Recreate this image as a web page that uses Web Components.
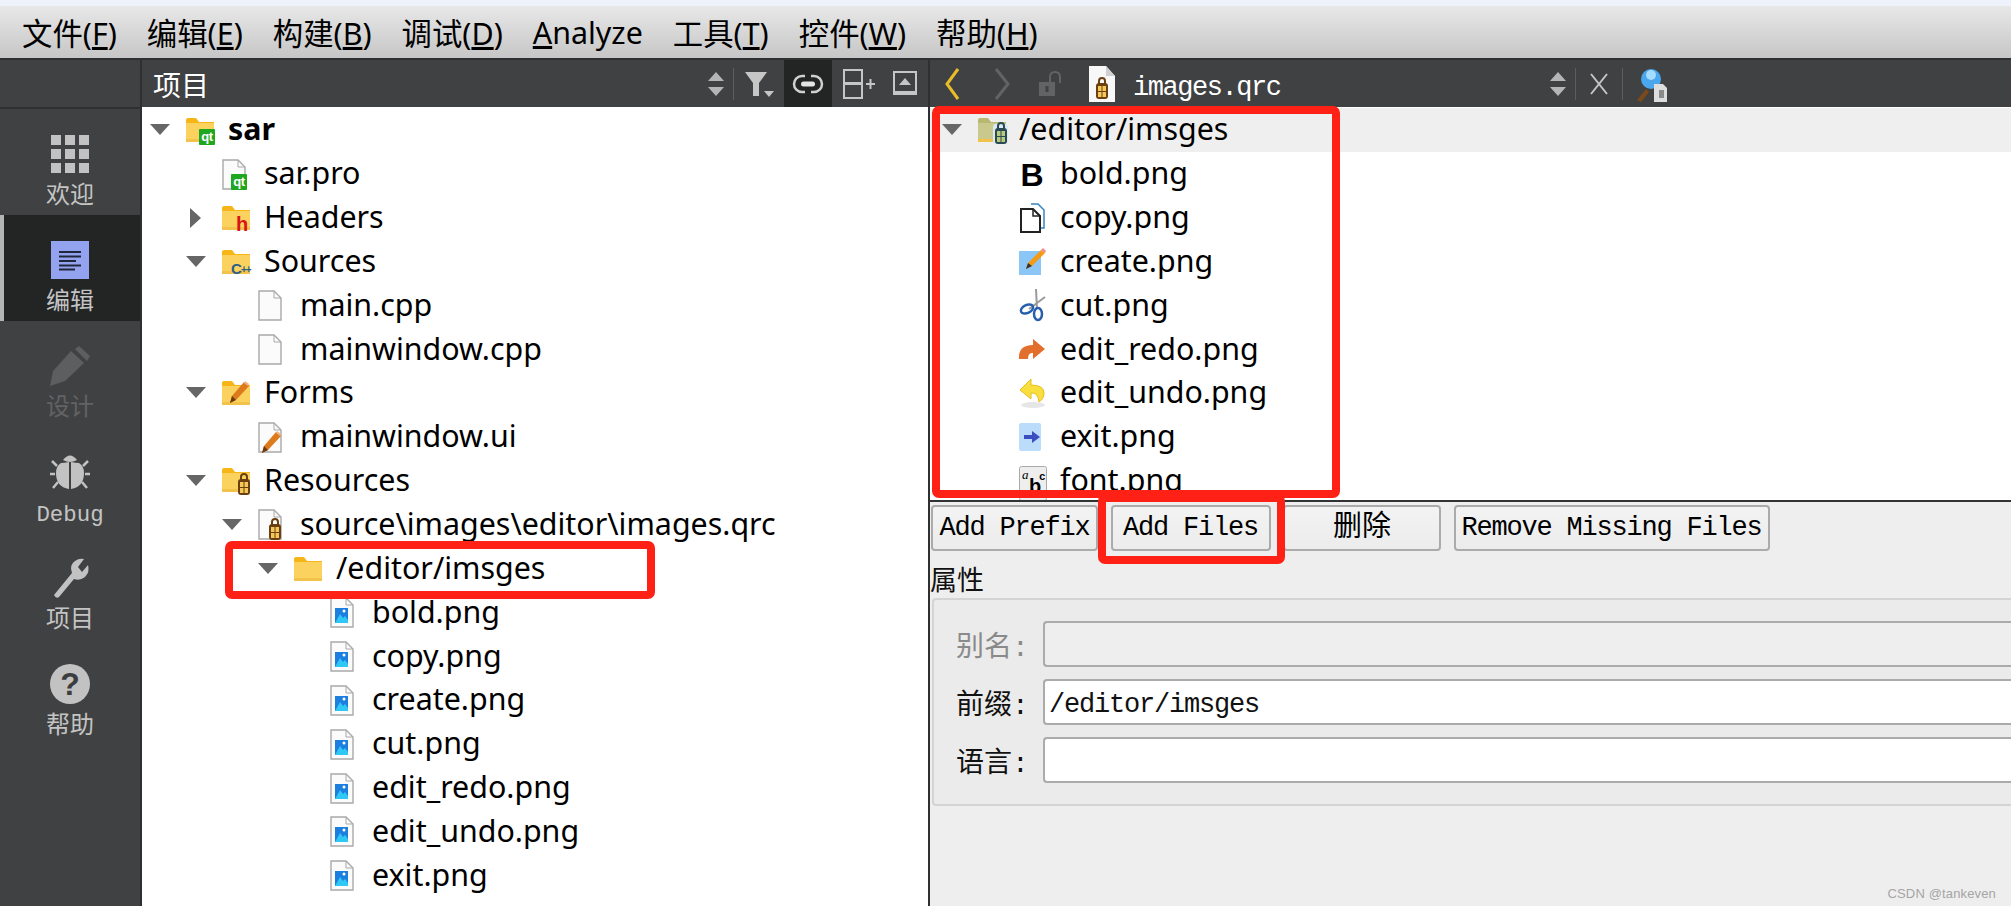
<!DOCTYPE html>
<html lang="zh"><head><meta charset="utf-8"><title>Qt Creator</title>
<style>
html,body{margin:0;height:906px;width:2011px;overflow:hidden;background:#eee}
body{font-family:"Noto Sans","Noto Sans CJK SC",sans-serif;}
</style></head><body>
<ide-app></ide-app>
<script>
const CJK='"Noto Sans","Noto Sans CJK SC",sans-serif';
const MONO='"Liberation Mono","Noto Sans CJK SC",monospace';
const qt=(x,y)=>`<rect x="${x}" y="${y}" width="16" height="16" rx="1" fill="#1fa81f"/><text x="${x+8}" y="${y+12}" font-family="Liberation Sans" font-weight="700" font-size="13" letter-spacing="-.5" text-anchor="middle" fill="#fff">qt</text>`;
const folderBase=(f='#fbd25e',t='#f7b617')=>`<path d="M0 4q0-2 2-2h8l3 4h15v20H0z" fill="${t}"/><rect x="0" y="7" width="28" height="19" fill="${f}"/><rect x="0" y="23" width="28" height="3" fill="#f3c24a"/>`;
const lockG=(x,y,c='#6b3f10',w='#f4c95a')=>`<path d="M${x+3} ${y+6}v-3q0-3 3-3t3 3v3" fill="none" stroke="${c}" stroke-width="2"/><rect x="${x}" y="${y+5}" width="12" height="16" rx="3" fill="${c}"/><rect x="${x+2}" y="${y+8}" width="3.500" height="5" fill="${w}"/><rect x="${x+6.500}" y="${y+8}" width="3.500" height="5" fill="${w}"/><rect x="${x+2}" y="${y+14}" width="3.500" height="5" fill="${w}"/><rect x="${x+6.500}" y="${y+14}" width="3.500" height="5" fill="${w}"/>`;
const page=(x=1)=>`<path d="M${x} 1h15l7 7v22H${x}z" fill="#fbfbfb" stroke="#a9a9a9" stroke-width="1.400"/><path d="M${x+15} 1v7h7" fill="none" stroke="#a9a9a9"/>`;
const penc=(x,y,s=1)=>`<g transform="translate(${x} ${y}) scale(${s})"><path d="M0 22l2-7L14 1l5 4L6 19z" fill="#dd7a1c"/><path d="M0 22l2-7 4 4z" fill="#6b3a10"/><path d="M15 0l4 3-1 2-4-3z" fill="#f0b080"/></g>`;
const ICONS={
 grid:[38,38,[0,14,28].flatMap(y=>[0,14,28].map(x=>`<rect x="${x}" y="${y}" width="10" height="10" fill="#c2c2c2"/>`)).join('')],
 edit:[38,38,`<rect width="38" height="38" fill="#94a3ef"/><path d="M8 11h22M8 15.500h22M8 20h17M8 24.500h22M8 28.500h16" stroke="#20263c" stroke-width="2"/>`],
 pencil:[40,40,`<path d="M0 40l3-15L21 5l13 12-19 18z" fill="#5d5e60"/><path d="M25 3l4-3 11 10-3 5z" fill="#5d5e60"/>`],
 bug:[40,38,`<path d="M13 7q7-9 14 0-7 4-14 0z" fill="#c2c2c2"/><path d="M19 9v27Q6 34 6 20q0-7 5-10 3 0 8-1z" fill="#c2c2c2"/><path d="M21 9v27q13-2 13-16 0-7-5-10-3 0-8-1z" fill="#c2c2c2"/><path d="M7 13L2 8M33 13l5-5M5 21H0M35 21h5M8 29l-5 6M32 29l5 6" stroke="#c2c2c2" stroke-width="2.500"/>`],
 wrench:[38,40,`<path d="M3 37L21 15q-3-8 3-12 4-3 9-2l-6 8 4 5 6-7q2 7-3 12-5 4-11 2L8 39q-3 2-5-2z" fill="#c2c2c2"/>`],
 help:[40,40,`<circle cx="20" cy="20" r="20" fill="#c2c2c2"/><text x="20" y="31" font-family="Liberation Sans" font-weight="700" font-size="32" text-anchor="middle" fill="#3c3d3e">?</text>`],
 updown:[16,32,`<path d="M8 4l8 9H0zM0 19h16l-8 9z" fill="#b5b5b5"/>`],
 filter:[30,26,`<path d="M0 1h22L14 12v13H8V12z" fill="#c6c6c6"/><path d="M19 20h10l-5 6z" fill="#c6c6c6"/>`],
 link:[28,22,`<path d="M11 3H8a8 8 0 000 16h3M17 3h3a8 8 0 010 16h-3" fill="none" stroke="#d0d0d0" stroke-width="2.500"/><rect x="7" y="8.500" width="14" height="5" rx="2.500" fill="#e4e4e4"/>`],
 split:[32,30,`<rect x="1" y="1" width="18" height="13" fill="none" stroke="#c6c6c6" stroke-width="2"/><rect x="1" y="15" width="18" height="14" fill="none" stroke="#c6c6c6" stroke-width="2"/><path d="M23 15h9M27.500 10v10" stroke="#c6c6c6" stroke-width="2"/>`],
 hide:[24,26,`<rect x="1" y="1" width="22" height="22" fill="none" stroke="#c6c6c6" stroke-width="2"/><rect x="0" y="20" width="24" height="4" fill="#c6c6c6"/><path d="M12 7l6 7H6z" fill="#c6c6c6"/>`],
 back:[16,32,`<path d="M14 1L3 16l11 15" fill="none" stroke="#e8bd27" stroke-width="3"/>`],
 fwd:[16,32,`<path d="M2 1l12 15L2 31" fill="none" stroke="#626364" stroke-width="3"/>`],
 lock:[26,26,`<path d="M11 12V6q0-5 5-5t5 5v6" fill="none" stroke="#626364" stroke-width="2"/><rect x="0" y="11" width="16" height="14" fill="#626364"/><rect x="6.500" y="15" width="3" height="6" fill="#404142"/>`],
 qrcfile:[28,38,`<path d="M1 1h17l9 10v26H1z" fill="#f8f8f8"/><path d="M18 1v10h9" fill="#d0d0d0"/>${lockG(8,13)}`],
 close:[18,22,`<path d="M1 1l16 20M17 1L1 21" stroke="#c6c6c6" stroke-width="2"/>`],
 locator:[32,36,`<path d="M2 34l9-11 3 3-8 10z" fill="#7a4a1c"/><circle cx="16" cy="13" r="10" fill="#4aa7ee"/><circle cx="16" cy="9" r="5" fill="#a6dcff"/><path d="M19 18h9l4 4v14H19z" fill="#ddd"/><path d="M24 24h5v8h-5z" fill="#8a8a8a"/>`],
 fqt:[29,27,`${folderBase()}${qt(13,13)}`],
 fh:[29,27,`${folderBase()}<text x="20" y="27" font-family="Liberation Sans" font-weight="700" font-size="20" text-anchor="middle" fill="#d8141a">h</text>`],
 fcpp:[29,27,`${folderBase()}<text x="9" y="26" font-family="Liberation Sans" font-weight="700" font-size="15" fill="#2c5f86">C</text><text x="19" y="25" font-family="Liberation Sans" font-weight="700" font-size="10" letter-spacing="-1" fill="#2c5f86">++</text>`],
 fform:[29,27,`${folderBase()}${penc(8,2,1)}`],
 flock:[29,30,`${folderBase()}${lockG(16,8)}`],
 folder:[29,27,folderBase()],
 fprefix:[30,28,`${folderBase('#c9c98e','#b8b870')}<rect x="15" y="8" width="15" height="20" rx="3" fill="#dbe9f6"/>${lockG(17,7,'#2a4a52','#b9c97e')}`],
 pqt:[26,30,`${page()}${qt(9,15)}`],
 pcpp:[26,30,page()],
 pui:[26,30,`${page()}${penc(4,9,1)}`],
 pqrc:[26,32,`${page()}${lockG(11,10)}`],
 png:[24,30,`${page()}<path d="M5 11h13v15H5z" fill="#1c7fe0"/><path d="M5 26l5-9 3 4 2-2 3 4v3z" fill="#2fc7f4"/><circle cx="14" cy="14" r="1.500" fill="#fff"/>`],
 b:[26,28,`<text x="13" y="26" font-family="Liberation Sans" font-weight="700" font-size="32" text-anchor="middle" fill="#000">B</text>`],
 copy:[26,30,`<path d="M12 1h7l6 6v18h-5" fill="none" stroke="#3a84c0" stroke-width="1.500"/><path d="M2 6h12l7 7v16H2z" fill="#fff" stroke="#222" stroke-width="2"/><path d="M14 6v7h7" fill="none" stroke="#222" stroke-width="1.500"/>`],
 create:[26,28,`<rect y="4" width="22" height="24" fill="#8cc6f7"/><path d="M7 22l2-6L22 3l4 3-13 13z" fill="#f49a14"/><path d="M7 22l2-6 4 3z" fill="#333"/><path d="M22 3l2-2 3 3-1 2z" fill="#f08a8a"/>`],
 cut:[28,32,`<path d="M26 8L10 20M17 0l1 20" stroke="#9a9a9a" stroke-width="2" fill="none"/><ellipse cx="8" cy="20" rx="6.500" ry="4" transform="rotate(-25 8 20)" fill="none" stroke="#2a5fae" stroke-width="2.500"/><ellipse cx="19" cy="25" rx="4" ry="6" fill="none" stroke="#2a5fae" stroke-width="2.500"/>`],
 redo:[26,20,`<path d="M14 0l12 10-12 10v-6q-5-1-5 6H0Q-1 6 14 6z" fill="#e2702c"/>`],
 undo:[26,30,`<ellipse cx="14" cy="27" rx="12" ry="3" fill="#e6e6e6"/><path d="M12 1L1 12l11 9v-6q7-1 8 9 5-3 5-9 0-8-13-8z" fill="#f8df3e" stroke="#e6bd22"/>`],
 exit:[22,28,`<rect width="22" height="28" rx="2" fill="#bcdcfb"/><path d="M5 12h8V8l8 6-8 6v-4H5z" fill="#3c4fc0"/>`],
 font:[28,30,`<rect x=".5" y=".5" width="27" height="34" rx="2" fill="#eee" stroke="#aaa"/><text x="3" y="13" font-family="Liberation Serif" font-style="italic" font-size="13">a</text><text x="10" y="27" font-family="Liberation Sans" font-weight="700" font-size="20">b</text><text x="20" y="14" font-family="Liberation Mono" font-weight="700" font-size="11">c</text>`],
};
function def(name,css,html,init){
 customElements.define(name,class extends HTMLElement{
  constructor(){super();this.attachShadow({mode:'open'}).innerHTML=`<style>${css}</style>${html}`;}
  connectedCallback(){init&&init.call(this,this.shadowRoot);}
 });
}
def('ide-icon',':host{display:inline-flex;flex:none}svg{display:block;overflow:visible}','',function(r){
 if(r.querySelector('svg'))return;
 const [w,h,b]=ICONS[this.getAttribute('name')];
 r.innerHTML+=`<svg xmlns="http://www.w3.org/2000/svg" width="${w}" height="${h}" viewBox="0 0 ${w} ${h}">${b}</svg>`;
});
def('menu-bar',`:host{display:flex;align-items:center;gap:30px;padding-left:22px;box-sizing:border-box;
 background:linear-gradient(#e8e8e8,#c6c6c6);border-bottom:2px solid #2f3031;color:#000;font:30.4px ${CJK};height:54px}`,'<slot></slot>');
def('side-item',`:host{display:flex;flex-direction:column;align-items:center;height:106px;box-sizing:border-box;padding-top:var(--pt,25px);color:#c4c4c4;font:24px/30px ${CJK};position:relative}
 :host([active]){background:#232525}
 :host([active])::before{content:"";position:absolute;left:0;top:0;bottom:0;width:4px;background:#b4b4b4}
 :host([disabled]){color:#626364}
 .i{height:40px;display:flex;align-items:center;justify-content:center}
 .l{margin-top:5px;white-space:nowrap}
 :host([mono]) .l{font:22.4px/30px ${MONO};margin-top:8px}`,'<div class="i"><slot name="icon"></slot></div><div class="l"><slot></slot></div>');
def('side-bar',`:host{display:flex;flex-direction:column;width:142px;flex:none;background:#404142;box-sizing:border-box;border-right:2px solid #2f3031;height:846px}
 .top{height:47px;border-bottom:2px solid #2f3031;box-sizing:content-box;margin-bottom:0}`,'<div class="top"></div><slot></slot>');
def('tool-bar',`:host{display:flex;align-items:center;height:47px;background:#404142;color:#fff;flex:none;font:28px ${CJK};position:relative}`,'<slot></slot>');
def('tool-sep',':host{display:block;width:1px;height:32px;background:#5c5d5e;flex:none}','');
def('tree-row',`:host{display:flex;align-items:center;height:43.85px;flex:none;padding-left:calc(var(--left,8px) + var(--level,0) * var(--indent,36px));color:#000;font:30.4px ${CJK};white-space:nowrap;box-sizing:border-box}
 :host([current]){background:#efefef}
 :host([bold]){font-weight:700}
 .a{width:36px;flex:none;display:flex;align-items:center}
 .ic{width:var(--icon-w,42px);flex:none;display:flex;align-items:center}
 .t{position:relative;top:-1px}
 i{display:block;width:0;height:0}
 :host([open]) i{border-left:10px solid transparent;border-right:10px solid transparent;border-top:11px solid #666}
 :host([closed]) i{margin-left:4px;border-top:10px solid transparent;border-bottom:10px solid transparent;border-left:11px solid #666}`,
 '<div class="a"><i></i></div><div class="ic"><slot name="icon"></slot></div><div class="t"><slot></slot></div>');
def('red-box',`:host{position:absolute;display:block;box-sizing:border-box;border:8px solid #ff2116;border-radius:7px;pointer-events:none}`,'');
def('push-btn',`:host{display:flex;align-items:center;justify-content:center;height:46px;box-sizing:border-box;border:2px solid #ababab;border-radius:4px;background:linear-gradient(#f3f3f3,#ececec);color:#000;font:27px/1 ${MONO};letter-spacing:-1.2px;flex:none;white-space:nowrap}`,'<slot></slot>');
def('form-row',`:host{display:flex;align-items:center;gap:16px;height:46px;font:27px ${MONO};letter-spacing:-1.2px;color:#111}
 :host([disabled]){color:#8a8a8a}
 .l{width:71px;flex:none;white-space:nowrap;letter-spacing:0;font-size:28px}
 .f{flex:1;height:46px;box-sizing:border-box;border:2px solid #ababab;border-right:0;border-radius:4px 0 0 4px;background:#fff;padding-left:4px;line-height:48px;color:#111;white-space:nowrap}
 :host([disabled]) .f{background:#eee}`,'<div class="l"><slot name="label"></slot></div><div class="f"><slot></slot></div>');
def('group-box',`:host{display:flex;flex-direction:column;gap:12px;margin:0 0 0 2px;height:208px;box-sizing:border-box;padding:21px 0 0 22px;background:#ebebeb;border:2px solid #d4d4d4;border-right:0;border-radius:4px 0 0 4px}`,'<slot></slot>');
def('tree-pane',`:host{display:flex;flex-direction:column;background:#fff;overflow:hidden;position:relative;box-sizing:border-box}`,'<slot></slot>');
def('left-pane',`:host{display:flex;flex-direction:column;width:786px;flex:none;height:846px;background:#fff}`,'<slot></slot>');
def('right-pane',`:host{display:flex;flex-direction:column;flex:1;min-width:0;height:846px;background:#eee;border-left:2px solid #2f3031;position:relative}`,'<slot></slot>');
def('water-mark',`:host{position:absolute;right:15px;bottom:5px;font:13px "Liberation Sans",sans-serif;color:#a5a5a5;letter-spacing:.15px}`,'<slot></slot>');
const row=(attrs,ic,t)=>`<tree-row ${attrs}><ide-icon slot="icon" name="${ic}"></ide-icon>${t}</tree-row>`;
const lv=n=>`style="--level:${n}"`;
const pngs=['bold','copy','create','cut','edit_redo','edit_undo','exit'];
def('ide-app',`:host{display:flex;flex-direction:column;width:2011px;height:906px;overflow:hidden}
 .strip{height:6px;background:#eef2fb;flex:none}
 .body{display:flex;flex:1;min-height:0;position:relative}
 .menu u{text-underline-offset:2px}
 .title{margin-left:11px;flex:1}
 .file{font:27px ${MONO};letter-spacing:-1.45px;flex:1;margin-left:17px;position:relative;top:4px}
 .on{width:48px;height:47px;background:#232525;display:flex;align-items:center;justify-content:center;flex:none}
 tool-bar ide-icon{flex:none}
 .btns{display:flex;gap:12.5px;height:46px;padding:3px 0 0 1px;flex:none}
 .big{font-size:29px;letter-spacing:0}
 .prop{font:27px/36px ${CJK};height:47px;padding-top:11px;box-sizing:border-box;flex:none;color:#111}
 .line{height:2px;background:#333;flex:none}
 tree-pane.r{--left:12px;--indent:41px;--icon-w:41px;height:393px;flex:none;padding-top:1px}
 tree-pane.l{flex:1;padding-top:1px}
`,`
<div class="strip"></div>
<menu-bar class="menu"><span>文件(<u>F</u>)</span><span>编辑(<u>E</u>)</span><span>构建(<u>B</u>)</span><span>调试(<u>D</u>)</span><span><u>A</u>nalyze</span><span>工具(<u>T</u>)</span><span>控件(<u>W</u>)</span><span>帮助(<u>H</u>)</span></menu-bar>
<div class="body">
<side-bar>
 <side-item><ide-icon slot="icon" name="grid"></ide-icon>欢迎</side-item>
 <side-item active><ide-icon slot="icon" name="edit"></ide-icon>编辑</side-item>
 <side-item disabled><ide-icon slot="icon" name="pencil"></ide-icon>设计</side-item>
 <side-item mono><ide-icon slot="icon" name="bug"></ide-icon>Debug</side-item>
 <side-item><ide-icon slot="icon" name="wrench"></ide-icon>项目</side-item>
 <side-item><ide-icon slot="icon" name="help"></ide-icon>帮助</side-item>
</side-bar>
<left-pane>
 <tool-bar>
  <span class="title">项目</span>
  <ide-icon name="updown" style="margin-right:9px"></ide-icon><tool-sep></tool-sep>
  <ide-icon name="filter" style="margin-left:11px;margin-right:9px"></ide-icon>
  <span class="on"><ide-icon name="link"></ide-icon></span>
  <ide-icon name="split" style="margin-left:11px"></ide-icon>
  <ide-icon name="hide" style="margin:0 11px 0 18px"></ide-icon>
 </tool-bar>
 <tree-pane class="l">
  ${row('open bold '+lv(0),'fqt','sar')}
  ${row(lv(1),'pqt','sar.pro')}
  ${row('closed '+lv(1),'fh','Headers')}
  ${row('open '+lv(1),'fcpp','Sources')}
  ${row(lv(2),'pcpp','main.cpp')}
  ${row(lv(2),'pcpp','mainwindow.cpp')}
  ${row('open '+lv(1),'fform','Forms')}
  ${row(lv(2),'pui','mainwindow.ui')}
  ${row('open '+lv(1),'flock','Resources')}
  ${row('open '+lv(2),'pqrc','source\\images\\editor\\images.qrc')}
  ${row('open '+lv(3),'folder','/editor/imsges')}
  ${pngs.map(n=>row(lv(4),'png',n+'.png')).join('')}
  <red-box style="left:83px;top:434px;width:430px;height:58px"></red-box>
 </tree-pane>
</left-pane>
<right-pane>
 <tool-bar>
  <ide-icon name="back" style="margin-left:14px"></ide-icon>
  <ide-icon name="fwd" style="margin-left:34px"></ide-icon>
  <ide-icon name="lock" style="margin-left:29px;margin-right:-8px"></ide-icon>
  <ide-icon name="qrcfile" style="margin-left:31px"></ide-icon>
  <span class="file">images.qrc</span>
  <ide-icon name="updown" style="margin-right:9px"></ide-icon><tool-sep></tool-sep>
  <ide-icon name="close" style="margin:0 14px"></ide-icon><tool-sep></tool-sep>
  <ide-icon name="locator" style="margin:0 344px 0 12px"></ide-icon>
 </tool-bar>
 <tree-pane class="r">
  ${row('open current '+lv(0),'fprefix','/editor/imsges')}
  ${row(lv(1),'b','bold.png')}
  ${row(lv(1),'copy','copy.png')}
  ${row(lv(1),'create','create.png')}
  ${row(lv(1),'cut','cut.png')}
  ${row(lv(1),'redo','edit_redo.png')}
  ${row(lv(1),'undo','edit_undo.png')}
  ${row(lv(1),'exit','exit.png')}
  ${row(lv(1),'font','font.png')}
 </tree-pane>
 <div class="line"></div>
 <div class="btns">
  <push-btn style="width:167px">Add Prefix</push-btn>
  <push-btn style="width:160px">Add Files</push-btn>
  <push-btn style="width:158px"><span class="big">删除</span></push-btn>
  <push-btn style="width:316px">Remove Missing Files</push-btn>
 </div>
 <div class="prop">属性</div>
 <group-box>
  <form-row disabled><span slot="label">别名:</span></form-row>
  <form-row><span slot="label">前缀:</span>/editor/imsges</form-row>
  <form-row><span slot="label">语言:</span></form-row>
 </group-box>
 <red-box style="left:2px;top:46px;width:408px;height:392px"></red-box>
 <red-box style="left:168px;top:434px;width:187px;height:70px"></red-box>
 <water-mark>CSDN @tankeven</water-mark>
</right-pane>
</div>`);
</script>
</body></html>
